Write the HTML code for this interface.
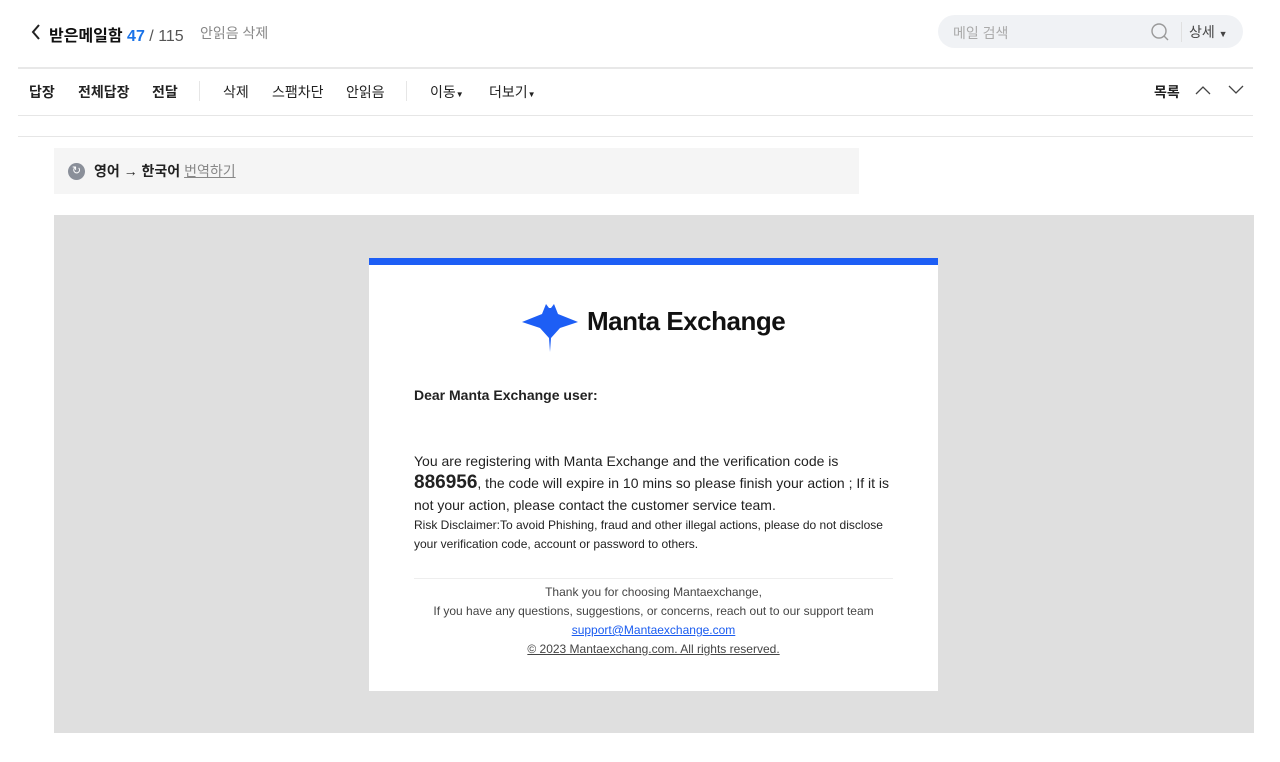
<!DOCTYPE html>
<html><head><meta charset="utf-8"><style>
*{margin:0;padding:0;box-sizing:border-box}
body{width:1280px;height:762px;background:#fff;font-family:"Liberation Sans","Noto Sans CJK KR",sans-serif;position:relative;overflow:hidden;color:#222}
.a{position:absolute;white-space:nowrap}
.tb{font-size:14px;top:82px;color:#222}
.line{position:absolute;left:18px;width:1235px;height:1px;background:#e6e6e6}
.sep{position:absolute;top:81px;width:1px;height:20px;background:#e6e6e6}
</style></head><body>
<svg class="a" style="left:30px;top:23px" width="12" height="18" viewBox="0 0 12 18"><path d="M9 2 L3 9 L9 16" fill="none" stroke="#222" stroke-width="2"/></svg>
<div class="a" style="left:49px;top:22px;font-size:16px;font-weight:bold;color:#111">받은메일함 <span style="color:#1a73e8">47</span> <span style="font-weight:normal;color:#555">/ 115</span></div>
<div class="a" style="left:200px;top:23px;font-size:14px;color:#888">안읽음 삭제</div>
<div class="a" style="left:938px;top:15px;width:305px;height:33px;border-radius:17px;background:#f0f2f5"></div>
<div class="a" style="left:953px;top:23px;font-size:14px;color:#aaa">메일 검색</div>
<svg class="a" style="left:1150px;top:22px" width="20" height="20" viewBox="0 0 20 20"><circle cx="9" cy="9" r="7" fill="none" stroke="#999" stroke-width="1.4"/><path d="M14 14 L18 18" stroke="#999" stroke-width="1.4"/></svg>
<div class="a" style="left:1181px;top:22px;width:1px;height:20px;background:#e0e0e0"></div>
<div class="a" style="left:1189px;top:22px;font-size:14px;color:#444">상세 <span style="font-size:9px">▼</span></div>
<div class="line" style="top:67px;height:2px;background:#e8e8e8"></div>
<div class="a tb" style="left:29px;font-weight:bold">답장</div>
<div class="a tb" style="left:78px;font-weight:bold">전체답장</div>
<div class="a tb" style="left:152px;font-weight:bold">전달</div>
<div class="sep" style="left:199px"></div>
<div class="a tb" style="left:223px">삭제</div>
<div class="a tb" style="left:272px">스팸차단</div>
<div class="a tb" style="left:346px">안읽음</div>
<div class="sep" style="left:406px"></div>
<div class="a tb" style="left:430px">이동<span style="font-size:8px">▼</span></div>
<div class="a tb" style="left:489px">더보기<span style="font-size:8px">▼</span></div>
<div class="a tb" style="left:1154px;font-weight:bold">목록</div>
<svg class="a" style="left:1195px;top:84px" width="16" height="12"><path d="M1 10 L8 3 L15 10" fill="none" stroke="#444" stroke-width="1.3"/></svg>
<svg class="a" style="left:1228px;top:84px" width="16" height="12"><path d="M1 2 L8 9 L15 2" fill="none" stroke="#444" stroke-width="1.3"/></svg>
<div class="line" style="top:115px"></div>
<div class="line" style="top:136px"></div>
<div class="a" style="left:54px;top:148px;width:805px;height:46px;background:#f5f5f5"></div>
<div class="a" style="left:68px;top:163px;width:17px;height:17px;border-radius:50%;background:#8a8f99;color:#fff;font-size:11px;text-align:center;line-height:17px">↻</div>
<div class="a" style="left:94px;top:161px;font-size:14px;font-weight:bold">영어 → 한국어 <span style="font-weight:normal;color:#888;text-decoration:underline">번역하기</span></div>
<div class="a" style="left:54px;top:215px;width:1200px;height:518px;background:#dfdfdf"></div>
<div class="a" style="left:369px;top:258px;width:569px;height:433px;background:#fff;border-top:7px solid #1d5ef5"></div>
<svg class="a" style="left:520px;top:302px" width="60" height="52" viewBox="0 0 60 52"><path d="M2 20 L22 12 L26 2 L29 6 L31 6 L34 2 L38 12 L58 20 L40 26 L31 36 L30 50 L29 36 L20 26 Z" fill="#1d5ef5"/></svg>
<div class="a" style="left:587px;top:306px;font-size:26px;font-weight:bold;color:#111;letter-spacing:-0.5px">Manta Exchange</div>
<div class="a" style="left:414px;top:387px;font-size:14px;font-weight:bold;color:#222">Dear Manta Exchange user:</div>
<div class="a" style="left:414px;top:450px;font-size:14px;line-height:22px;color:#222;white-space:normal;width:480px">You are registering with Manta Exchange and the verification code is <b style="font-size:19px">886956</b>, the code will expire in 10 mins so please finish your action ; If it is not your action, please contact the customer service team.</div>
<div class="a" style="left:414px;top:516px;font-size:12px;line-height:19px;color:#222;white-space:normal;width:485px">Risk Disclaimer:To avoid Phishing, fraud and other illegal actions, please do not disclose your verification code, account or password to others.</div>
<div class="a" style="left:414px;top:578px;width:479px;height:1px;background:#eee"></div>
<div class="a" style="left:369px;top:583px;width:569px;text-align:center;font-size:12px;line-height:19px;color:#444">Thank you for choosing Mantaexchange,<br>If you have any questions, suggestions, or concerns, reach out to our support team<br><span style="color:#1a5cf0;text-decoration:underline">support@Mantaexchange.com</span><br><span style="text-decoration:underline">© 2023 Mantaexchang.com. All rights reserved.</span></div>
</body></html>
